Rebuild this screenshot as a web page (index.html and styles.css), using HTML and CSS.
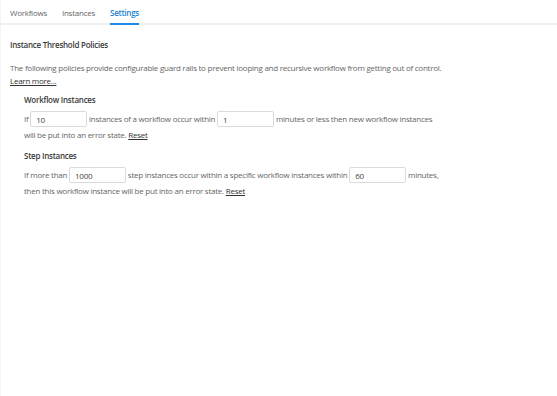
FILE: index.html
```html
<!DOCTYPE html>
<html>
<head>
<meta charset="utf-8">
<link rel="stylesheet" href="styles.css">
</head>
<body>
<div class="page">
  <nav class="tabs">
    <span class="tab">Workflows</span>
    <span class="tab">Instances</span>
    <span class="tab active">Settings</span>
  </nav>
  <main class="content">
    <h1 class="title">Instance Threshold Policies</h1>
    <p class="intro">The following policies provide configurable guard rails to prevent looping and recursive workflow from getting out of control.<br><a class="link" href="#">Learn more...</a></p>
    <section class="policy">
      <h2 class="subtitle">Workflow Instances</h2>
      <p class="rule">If <input class="field" value="10"> instances of a workflow occur within <input class="field" value="1"> minutes or less then new workflow instances<br>will be put into an error state. <a class="link" href="#">Reset</a></p>
    </section>
    <section class="policy">
      <h2 class="subtitle">Step Instances</h2>
      <p class="rule">If more than <input class="field" value="1000"> step instances occur within a specific workflow instances within <input class="field" value="60"> minutes,<br>then this workflow instance will be put into an error state. <a class="link" href="#">Reset</a></p>
    </section>
  </main>
</div>
</body>
</html>
```
FILE: styles.css
```css
html, body {
  margin: 0;
  padding: 0;
  background: #fff;
}
body {
  font-family: "Open Sans", "Noto Sans", sans-serif;
  font-size: 8px;
  letter-spacing: -0.25px;
  color: #555;
}
.page {
  min-height: 396px;
  box-sizing: border-box;
  border-left: 1px solid #f4f4f4;
}
.tabs {
  display: flex;
  gap: 15px;
  padding: 0 0 0 9px;
  border-bottom: 2px solid #efefef;
  height: 23px;
}
.tab {
  display: flex;
  align-items: center;
  height: 23px;
  box-sizing: border-box;
  padding-top: 2px;
  color: #666;
}
.tab.active {
  color: #1a7fd4;
  font-weight: 600;
  border-bottom: 2px solid #1e88e5;
  height: 25px;
  margin-bottom: -2px;
}
.content {
  padding: 14px 9px 0 9px;
}
.title {
  margin: 0;
  font-size: 8px;
  font-weight: 600;
  color: #3a3a3a;
  line-height: 12px;
}
.intro {
  margin: 10px 0 0 0;
  line-height: 13px;
  color: #666;
}
.link {
  color: #333;
  text-decoration: underline;
}
.policy {
  padding-left: 14px;
}
.subtitle {
  margin: 7px 0 0 0;
  font-size: 8px;
  font-weight: 600;
  color: #3a3a3a;
  line-height: 12px;
}
.rule {
  margin: 5px 0 0 0;
  line-height: 16px;
  color: #666;
}
.field {
  width: 57px;
  height: 16px;
  box-sizing: border-box;
  border: 1px solid #dadada;
  border-radius: 2px;
  padding: 0 5px;
  font-family: "Open Sans", "Noto Sans", sans-serif;
  font-size: 8px;
  letter-spacing: -0.25px;
  color: #444;
  vertical-align: top;
  margin: 0;
}
```
